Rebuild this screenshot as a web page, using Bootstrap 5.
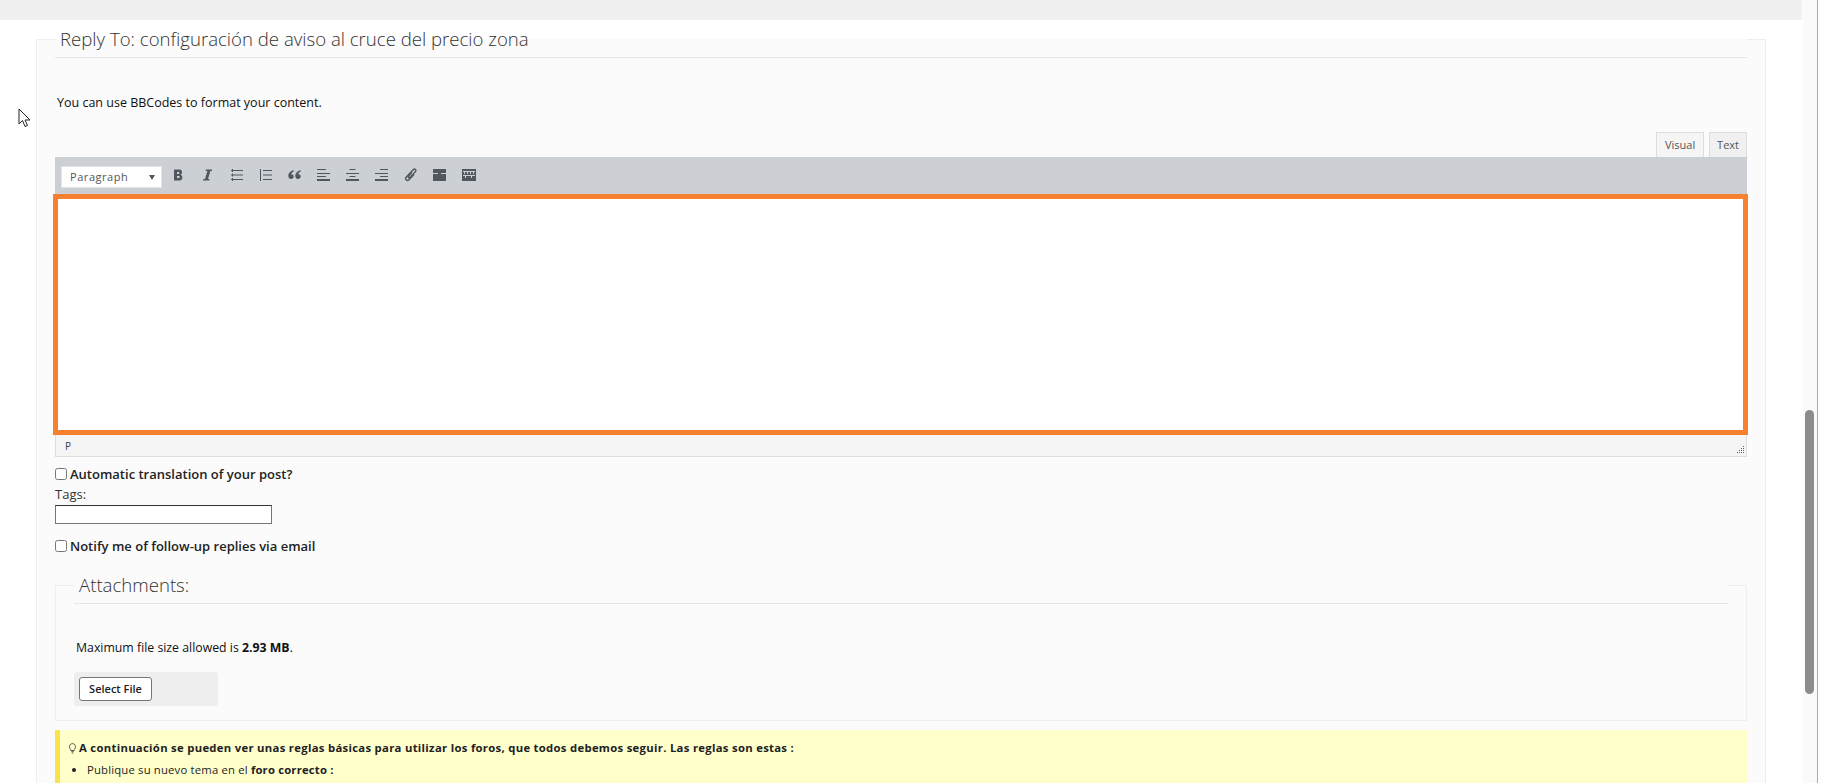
<!DOCTYPE html>
<html lang="en"><head><meta charset="utf-8"><title>Reply</title>
<link rel="stylesheet" href="https://cdn.jsdelivr.net/npm/bootstrap@5.3.0/dist/css/bootstrap.min.css">
<script src="https://cdn.jsdelivr.net/npm/bootstrap@5.3.0/dist/js/bootstrap.bundle.min.js"></script>
<style>
html,body{height:783px;overflow:hidden;background:#fff}
body{font-family:"Open Sans",sans-serif;font-size:12px;color:#111;line-height:18px;position:relative}
.shell{width:1802px}
.topband{height:20px;background:#f0f0f0}
.replybox{margin:1px 36px 0 36px;width:1730px;background:#fbfbfb;border:1px solid #eee;padding:0 18px;height:800px;min-width:0}
.replybox legend,.attachbox legend{float:none;font-weight:300;color:#333;background:transparent;border-bottom:1px solid #e6e6e6;margin:0;padding:0 0 0 5px;font-size:18.6px;line-height:36px}
.replybox legend{width:1692px}
.attachbox legend{width:1654px;line-height:37px}
.hint{margin:36px 0 0 2px;height:18px;color:#111;font-size:12.5px}
.tabsrow{margin-top:20px;height:25px;justify-content:flex-end;gap:5px}
.edtab{font-size:11px;height:25px;line-height:24px;padding:0 7px;border:1px solid #ddd;border-bottom:0;color:#555;background:#f0f0f1}
.edtab.on{background:#f5f5f5;width:48px;text-align:center}
.toolbar{height:37px;background:#ccd0d4;padding:0 6px;width:1692px}
.fmt{width:101px;height:22px;margin-top:3px;margin-right:2px;background:#fff;border:1px solid #e2e4e7;font-size:11px;color:#555;padding:0 6px 0 8px;letter-spacing:.55px}
.tb{width:29px;height:24px;margin-top:-2px;color:#50575e}
.tb svg{display:block}
.editarea{height:241px;width:1695px;margin-left:-2px;border:5px solid #f7812f;background:#fff}
.statusbar{height:22px;width:1692px;background:#f5f5f5;border:1px solid #ddd;border-top:0;font-size:10px;color:#444;padding:1px 0 0 9px;position:relative;line-height:20px}
.grip{position:absolute;right:1px;bottom:2px}
.chkrow{font-weight:600;color:#222;font-size:13px;line-height:18px;height:18px;gap:3px}
.rowa{margin-top:8px}
.rowb{margin-top:13px}
.chk{width:12px;height:12px;border:1px solid #767676;border-radius:2.5px;background:#fff;margin:0;appearance:none}
.tagslbl{margin-top:2px;font-size:13px;color:#333;line-height:18px;height:18px}
.tagsinput{display:block;width:217px;height:19px;margin-top:2px;border:1px solid #767676;border-top-color:#333;border-radius:0;background:#fff;padding:0}
.attachbox{margin:11px 0 0;width:1692px;background:#fbfbfb;border:1px solid #eee;padding:0 18px;height:155px;min-width:0}
.maxsize{margin:35px 0 0 2px;color:#111;font-size:12.3px;height:18px}
.maxsize b{font-weight:700}
.selbox{width:144px;height:34px;background:#eee;border-radius:3px;margin-top:15px;padding:5px}
.selbtn{width:73px;height:24px;padding:0;background:#fff;border:1px solid #767676;border-radius:3px;font-size:11px;font-weight:600;color:#222;line-height:22px}
.rulesbox{margin-top:9px;width:1692px;height:60px;background:#ffc;border-left:5px solid #fbe44b;font-size:11.3px;color:#222;padding:9px 0 0 9px;letter-spacing:.18px}
.rulesbox b{font-weight:700}
.rulesbox ul{margin:4px 0 0;padding-left:18px;list-style:disc}
.rulesbox .ttl{font-weight:700;line-height:18px;letter-spacing:.3px;gap:3px}
.scrolltrack{position:absolute;left:1803px;top:0;width:15px;height:783px;background:#fafafa;border-right:1px solid #aaa}
.scrollthumb{position:absolute;left:2px;top:410px;width:9px;height:284px;background:#8c8c8c;border-radius:5px}
.cursorpic{position:absolute;left:18px;top:108px}
</style></head><body>
<div class="shell">
<div class="topband"></div>
<fieldset class="replybox">
<legend>Reply To: configuración de aviso al cruce del precio zona</legend>
<div class="hint">You can use BBCodes to format your content.</div>
<div class="tabsrow d-flex"><div class="edtab on">Visual</div><div class="edtab">Text</div></div>
<div class="toolbar d-flex align-items-center">
<div class="fmt d-flex justify-content-between align-items-center"><span>Paragraph</span><svg width="6" height="5" viewBox="0 0 6 5"><path d="M0 0h6L3 5z" fill="#555"/></svg></div>
<div class="tb d-flex align-items-center justify-content-center"><svg width="9" height="12" viewBox="0 0 9 12"><path d="M0 .5h5.500C8.500.5 8.800 4.800 6.600 5.700 9.300 6.500 9 11.500 5.700 11.500H0zM3 3v2h1.600c1 0 1-2 0-2zM3 7v2h1.800c1.200 0 1.200-2 0-2z" fill="#50575e" fill-rule="evenodd"/></svg></div>
<div class="tb d-flex align-items-center justify-content-center"><svg width="9" height="12" viewBox="0 0 9 12"><path d="M3 .5h6V2H7.400L5 10h1.500l-.3 1.500H0L.3 10H2L4.400 2H2.700z" fill="#50575e"/></svg></div>
<div class="tb d-flex align-items-center justify-content-center"><svg width="12" height="12" viewBox="0 0 12 12"><path d="M0 1h12v1H0zM0 5.500h12v1H0zM0 10h12v1H0zM1 0h1v3H1zM1 4.500h1v3H1zM1 9h1v3H1z" fill="#50575e"/></svg></div>
<div class="tb d-flex align-items-center justify-content-center"><svg width="12" height="12" viewBox="0 0 12 12"><path d="M3 1h9v1H3zM3 5.500h9v1H3zM3 10h9v1H3zM0 0h1v12H0z" fill="#50575e"/></svg></div>
<div class="tb d-flex align-items-center justify-content-center"><svg width="13" height="9" viewBox="0 0 13 9"><path d="M5.500 0C2.500 1 .3 3 .3 5.600.3 7.700 1.300 9 3 9s2.700-1.100 2.700-2.500S4.700 4.200 3.300 4.200C3.600 3 4.300 2.200 5.800 1.300zM12.500 0C9.500 1 7.300 3 7.300 5.600 7.300 7.700 8.300 9 10 9s2.700-1.100 2.700-2.500-1-2.300-2.400-2.300c.3-1.200 1-2 2.500-2.900z" fill="#50575e"/></svg></div>
<div class="tb d-flex align-items-center justify-content-center"><svg width="13" height="12" viewBox="0 0 13 12"><path d="M0 0h9v1H0zM0 4h13v1H0zM0 7h9v1H0zM0 10h13v2H0z" fill="#50575e"/></svg></div>
<div class="tb d-flex align-items-center justify-content-center"><svg width="13" height="12" viewBox="0 0 13 12"><path d="M3.500 0h6v1h-6zM0 4h13v1H0zM3.500 7h6v1h-6zM0 10h13v2H0z" fill="#50575e"/></svg></div>
<div class="tb d-flex align-items-center justify-content-center"><svg width="13" height="12" viewBox="0 0 13 12"><path d="M5 0h8v1H5zM0 4h13v1H0zM5 7h8v1H5zM0 10h13v2H0z" fill="#50575e"/></svg></div>
<div class="tb d-flex align-items-center justify-content-center"><svg width="14" height="14" viewBox="0 0 14 14"><path d="M8 4 4.500 8.500c-.8 1 .5 2 1.400 1.100L11.500 3.500c1.300-1.500-.8-3.300-2.300-1.800L2.300 9c-1.900 2 .8 4.500 2.700 2.700l5-5.200" fill="none" stroke="#50575e" stroke-width="1.400"/></svg></div>
<div class="tb d-flex align-items-center justify-content-center"><svg width="13" height="12" viewBox="0 0 13 12"><path d="M0 0h13v4H0zM5 4h3v1H5zM0 5h13v7H0z" fill="#50575e"/></svg></div>
<div class="tb d-flex align-items-center justify-content-center"><svg width="14" height="12" viewBox="0 0 14 12"><path d="M0 0h14v12H0z" fill="#50575e"/><path d="M1 2h12v1H1zM2 3h1v2H2zM5 3h1v2H5zM8 3h1v2H8zM11 3h1v2H11zM1 6h12v1H1zM3 7h1v2H3zM9 7h1v2H9z" fill="#ccd0d4"/></svg></div>
</div>
<div class="editarea"></div>
<div class="statusbar">P<svg class="grip" width="9" height="9" viewBox="0 0 9 9"><path d="M7 1h1v1H7zM5 3h1v1H5zM7 3h1v1H7zM3 5h1v1H3zM5 5h1v1H5zM7 5h1v1H7zM1 7h1v1H1zM3 7h1v1H3zM5 7h1v1H5zM7 7h1v1H7z" fill="#666"/></svg></div>
<div class="chkrow rowa d-flex align-items-center"><input class="chk" type="checkbox" aria-label="t"><span>Automatic translation of your post?</span></div>
<div class="tagslbl">Tags:</div>
<input class="tagsinput" type="text" aria-label="tags">
<div class="chkrow rowb d-flex align-items-center"><input class="chk" type="checkbox" aria-label="n"><span>Notify me of follow-up replies via email</span></div>
<fieldset class="attachbox">
<legend>Attachments:</legend>
<div class="maxsize">Maximum file size allowed is <b>2.93 MB</b>.</div>
<div class="selbox"><button class="selbtn" type="button">Select File</button></div>
</fieldset>
<div class="rulesbox">
<div class="ttl d-flex align-items-center"><svg width="7" height="11" viewBox="0 0 7 11"><path d="M1.800 7.500C1.500 6 .5 5.500.5 3.700.5 2 1.800.6 3.500.6S6.500 2 6.500 3.700c0 1.800-1 2.300-1.300 3.800zM2.300 8.700h2.400M2.800 10h1.400" fill="none" stroke="#444" stroke-width=".9"/></svg><span>A continuación se pueden ver unas reglas básicas para utilizar los foros, que todos debemos seguir. Las reglas son estas :</span></div>
<ul><li>Publique su nuevo tema en el <b>foro correcto :</b></li></ul>
</div>
</fieldset>
</div>
<div class="scrolltrack"><div class="scrollthumb"></div></div>
<svg class="cursorpic" width="14" height="21" viewBox="0 0 14 21"><path d="M1 1v15l3.500-3.500L7 18.500l2.500-1-2.500-5.500h5z" fill="#fff" stroke="#222" stroke-width="1"/></svg>
</body></html>
